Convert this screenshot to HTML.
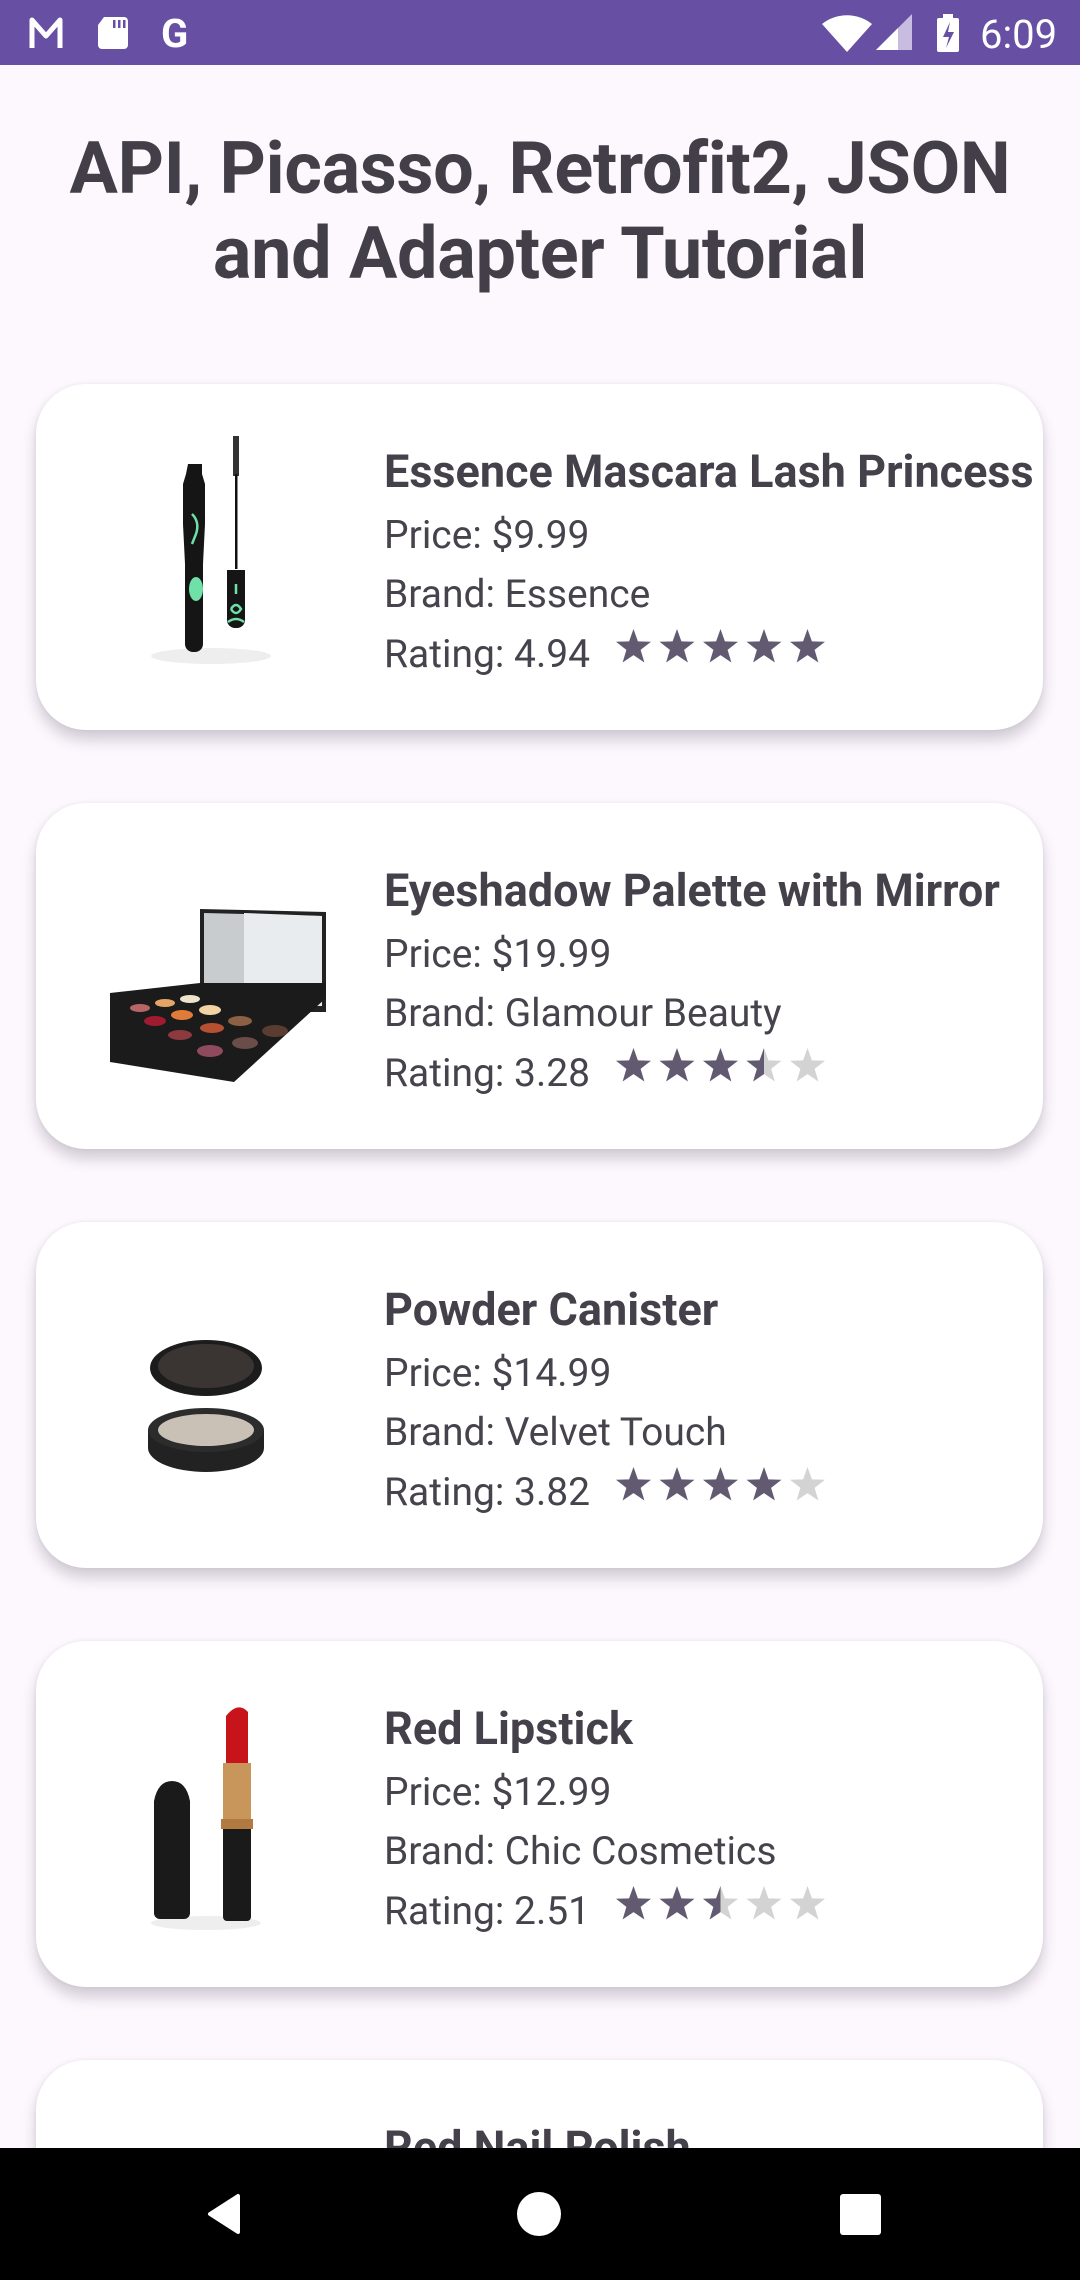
<!DOCTYPE html>
<html><head><meta charset="utf-8"><style>
*{margin:0;padding:0;box-sizing:border-box}
html{width:1080px;height:2280px;overflow:hidden}
body{width:1080px;height:2280px;background:#fdf7fe;position:relative;overflow:hidden;font-family:"Roboto","Liberation Sans",sans-serif;color:#47434d}
.sb{position:absolute;left:0;top:0;width:1080px;height:65px;background:#674fa3}
.title{position:absolute;left:0;top:126px;width:1080px;text-align:center;font-weight:bold;font-size:72px;line-height:85px;color:#433f49;letter-spacing:-0.3px;white-space:nowrap}
.card{position:absolute;left:36px;width:1007px;height:346px;background:#fff;border-radius:50px;box-shadow:0 10px 14px rgba(60,50,70,0.22),0 0 4px rgba(60,50,70,0.08)}
.t{position:absolute;left:348px;font-size:45px;line-height:53px;font-weight:bold;color:#45414b;white-space:nowrap}
.l{position:absolute;left:348px;font-size:39px;line-height:46px;color:#47434d;white-space:nowrap}
.stars{position:absolute;left:579px;top:245px;height:36px}
.img{position:absolute}
.nav{position:absolute;left:0;top:2148px;width:1080px;height:132px;background:#000}
</style></head><body>
<div class="sb">
<svg width="1080" height="65" style="position:absolute;left:0;top:0">
<path d="M32 48V20l14 16 14-16v28" stroke="#fff" stroke-width="5" fill="none" stroke-linejoin="round"/>
<path d="M104 17h20a4 4 0 0 1 4 4v24a4 4 0 0 1-4 4h-22a4 4 0 0 1-4-4V25z" fill="#fff"/>
<rect x="113" y="20" width="2.5" height="8" fill="#674fa3"/><rect x="118" y="20" width="2.5" height="8" fill="#674fa3"/><rect x="123" y="20" width="2.5" height="8" fill="#674fa3"/>
<text x="161" y="47" fill="#fff" font-size="40" font-weight="bold" font-family="Roboto, Liberation Sans">G</text>
<path d="M822 24a40 40 0 0 1 50 0l-25 28z" fill="#fff"/>
<path d="M876 50l36-36v36z" fill="#c8bde0"/><path d="M876 50l22-22v22z" fill="#fff"/>
<rect x="937" y="18" width="22" height="34" rx="2" fill="#fff"/><rect x="943" y="14" width="10" height="5" fill="#fff"/>
<path d="M950 22l-7 15h6l-3 11 8-16h-6z" fill="#674fa3"/>
<text x="980" y="48" fill="#fff" font-size="40" font-family="Roboto, Liberation Sans">6:09</text>
</svg></div>
<div class="title">API, Picasso, Retrofit2, JSON<br>and Adapter Tutorial</div>

<svg width="0" height="0" style="position:absolute"><defs>
<path id="st" d="M18.5 0l4.4 12.4 13.1.4-10.4 8.1 3.8 12.6-10.9-7.4-10.9 7.4 3.8-12.6L1 12.8l13.1-.4z"/>
<clipPath id="half"><rect x="0" y="0" width="18.5" height="36"/></clipPath>
</defs></svg>

<!-- card1 -->
<div class="card" style="top:384px">
<div class="t" style="top:61px">Essence Mascara Lash Princess</div>
<div class="l" style="top:128px">Price: $9.99</div>
<div class="l" style="top:187px">Brand: Essence</div>
<div class="l" style="top:247px">Rating: 4.94</div>
<svg class="stars" width="220" height="36"><g fill="#625a70"><use href="#st"/><use href="#st" x="43.5"/><use href="#st" x="87"/><use href="#st" x="130.5"/><use href="#st" x="174"/></g></svg>
<svg class="img" style="left:100px;top:50px" width="150" height="240">
<ellipse cx="75" cy="222" rx="60" ry="8" fill="#eee"/>
<path d="M52 30h14v10l3 10v40l-2 40v80a8 8 0 0 1-8 8h-2a8 8 0 0 1-8-8v-80l-2-40V50l3-10z" fill="#151515"/>
<path d="M56 80q8 8 4 20l-4 10" stroke="#6fe0a8" stroke-width="2.5" fill="none"/>
<ellipse cx="60" cy="155" rx="7" ry="12" fill="#6fe0a8"/>
<rect x="97" y="2" width="6" height="40" fill="#333"/>
<rect x="99" y="40" width="2.5" height="95" fill="#111"/>
<path d="M91 136h18v50a8 8 0 0 1-8 8h-2a8 8 0 0 1-8-8z" fill="#151515"/>
<path d="M100 150v10M95 175q5-8 10 0q-5 8-10 0M92 188q8-6 16 0" stroke="#6fe0a8" stroke-width="2.5" fill="none"/>
</svg>
</div>

<!-- card2 -->
<div class="card" style="top:803px">
<div class="t" style="top:61px">Eyeshadow Palette with Mirror</div>
<div class="l" style="top:128px">Price: $19.99</div>
<div class="l" style="top:187px">Brand: Glamour Beauty</div>
<div class="l" style="top:247px">Rating: 3.28</div>
<svg class="stars" width="220" height="36"><g fill="#d3d3d3"><use href="#st" x="130.5"/><use href="#st" x="174"/></g><g fill="#625a70"><use href="#st"/><use href="#st" x="43.5"/><use href="#st" x="87"/><g transform="translate(130.5 0)"><use href="#st" clip-path="url(#half)"/></g></g></svg>
<svg class="img" style="left:74px;top:100px" width="220" height="190">
<path d="M90 6l126 3v100l-126 0z" fill="#222"/>
<path d="M94 10l118 3v90l-118 0z" fill="#c8ccce"/><path d="M134 10l78 3v90h-78z" fill="#e9ecee"/>
<path d="M0 90l90-10 126 0 0 15-92 84-124-20z" fill="#1b1b1b"/>
<ellipse cx="30" cy="105" rx="10" ry="4" fill="#b56565"/><ellipse cx="55" cy="100" rx="10" ry="4" fill="#e3a466"/><ellipse cx="80" cy="96" rx="10" ry="4" fill="#eee4cc"/>
<ellipse cx="45" cy="118" rx="11" ry="5" fill="#a01a30"/><ellipse cx="72" cy="112" rx="11" ry="5" fill="#e07c3a"/><ellipse cx="100" cy="107" rx="11" ry="5" fill="#f3d3a3"/>
<ellipse cx="70" cy="132" rx="12" ry="5" fill="#8c3a40"/><ellipse cx="102" cy="125" rx="12" ry="5" fill="#b75030"/><ellipse cx="130" cy="118" rx="12" ry="5" fill="#8c6044"/>
<ellipse cx="100" cy="148" rx="13" ry="6" fill="#8f4a5e"/><ellipse cx="135" cy="140" rx="13" ry="6" fill="#6a4c48"/><ellipse cx="165" cy="128" rx="13" ry="6" fill="#5a3c30"/>
</svg>
</div>

<!-- card3 -->
<div class="card" style="top:1222px">
<div class="t" style="top:61px">Powder Canister</div>
<div class="l" style="top:128px">Price: $14.99</div>
<div class="l" style="top:187px">Brand: Velvet Touch</div>
<div class="l" style="top:247px">Rating: 3.82</div>
<svg class="stars" width="220" height="36"><g fill="#d3d3d3"><use href="#st" x="174"/></g><g fill="#625a70"><use href="#st"/><use href="#st" x="43.5"/><use href="#st" x="87"/><use href="#st" x="130.5"/></g></svg>
<svg class="img" style="left:110px;top:118px" width="130" height="140">
<ellipse cx="60" cy="28" rx="56" ry="28" fill="#1c1c1c"/><ellipse cx="60" cy="26" rx="48" ry="22" fill="#3a3532"/>
<path d="M2 90v18a58 24 0 0 0 116 0V90z" fill="#222"/>
<ellipse cx="60" cy="90" rx="58" ry="22" fill="#2c2c2c"/><ellipse cx="60" cy="90" rx="48" ry="16" fill="#c9c0b6"/>
</svg>
</div>

<!-- card4 -->
<div class="card" style="top:1641px">
<div class="t" style="top:61px">Red Lipstick</div>
<div class="l" style="top:128px">Price: $12.99</div>
<div class="l" style="top:187px">Brand: Chic Cosmetics</div>
<div class="l" style="top:247px">Rating: 2.51</div>
<svg class="stars" width="220" height="36"><g fill="#d3d3d3"><use href="#st" x="87"/><use href="#st" x="130.5"/><use href="#st" x="174"/></g><g fill="#625a70"><use href="#st"/><use href="#st" x="43.5"/><g transform="translate(87 0)"><use href="#st" clip-path="url(#half)"/></g></g></svg>
<svg class="img" style="left:110px;top:60px" width="130" height="230">
<ellipse cx="60" cy="222" rx="55" ry="7" fill="#eee"/>
<path d="M80 15q12-15 22-4v52h-22z" fill="#c6141a"/>
<rect x="77" y="62" width="28" height="58" fill="#c8955a"/><rect x="75" y="118" width="32" height="10" fill="#b07a40"/>
<path d="M77 128h28v88a4 4 0 0 1-4 4h-20a4 4 0 0 1-4-4z" fill="#1a1a1a"/>
<path d="M8 100q4-20 18-20q14 0 18 20v112a6 6 0 0 1-6 6h-24a6 6 0 0 1-6-6z" fill="#1a1a1a"/>
</svg>
</div>

<!-- card5 -->
<div class="card" style="top:2060px;height:88px;border-radius:50px 50px 0 0;overflow:hidden">
<div class="t" style="top:61px">Red Nail Polish</div>
</div>

<div class="nav">
<svg width="1080" height="132">
<path d="M238 48v36l-28-18z" fill="#fff" stroke="#fff" stroke-width="4" stroke-linejoin="round"/>
<ellipse cx="539" cy="66" rx="22" ry="22" fill="#fff"/>
<rect x="840" y="46" width="41" height="41" rx="3" fill="#fff"/>
</svg>
</div>
</body></html>
